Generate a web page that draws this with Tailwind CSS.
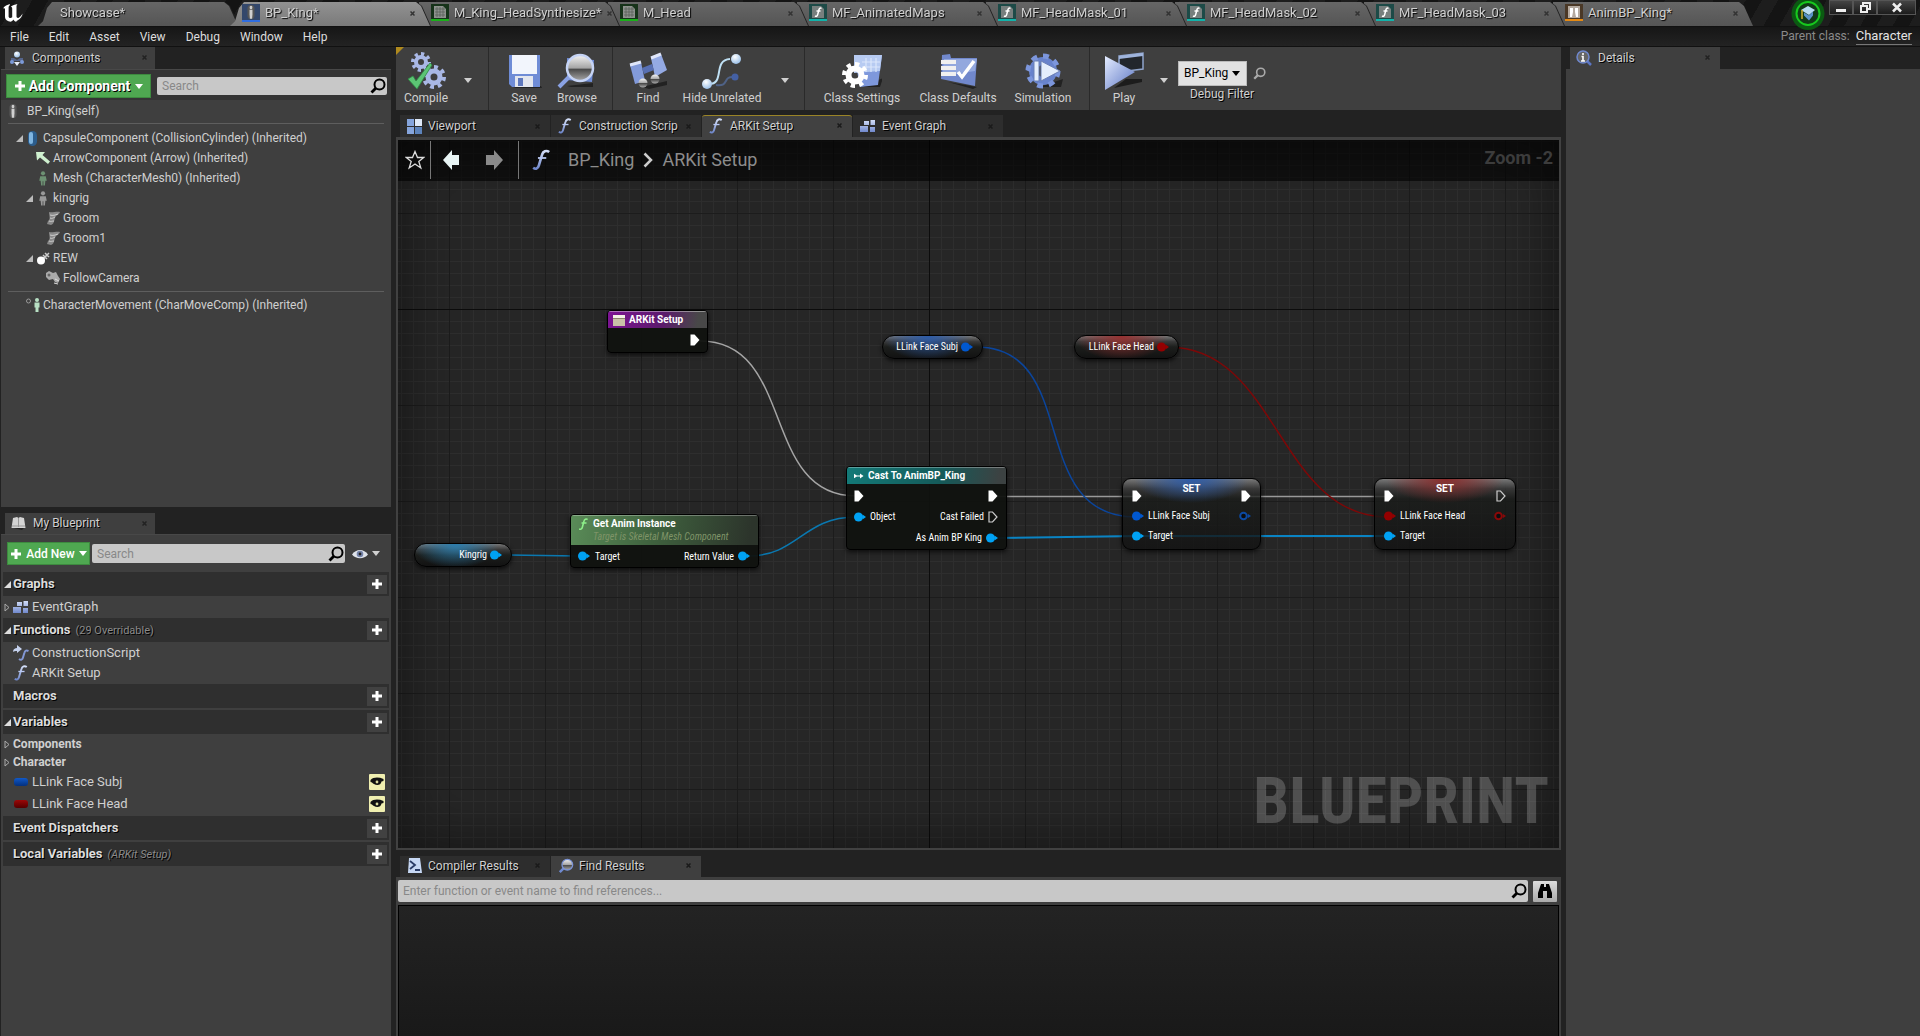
<!DOCTYPE html>
<html lang="en">
<head>
  <meta charset="UTF-8" />
  <meta name="viewport" content="width=device-width, initial-scale=1.0" />
  <title>BP_King - Blueprint Editor</title>
  <script src="https://cdn.jsdelivr.net/npm/@tailwindcss/browser@4"></script>
</head>
<body class="h-screen overflow-hidden bg-[#222] font-[Roboto,'Liberation_Sans',sans-serif] text-[12px] leading-4 text-[#d0d0d0] flex flex-col">

  <!-- shared icons -->
  <svg class="absolute size-0" aria-hidden="true">
    <defs>
      <linearGradient id="steel" x1="0" y1="0" x2="1" y2="1"><stop offset="0" stop-color="#e4ecff" /><stop offset="1" stop-color="#5c76c4" /></linearGradient>
      <linearGradient id="steelDown" x1="0" y1="0" x2="0" y2="1"><stop offset="0" stop-color="#d3def8" /><stop offset="1" stop-color="#7088cc" /></linearGradient>
      <linearGradient id="body" x1="0" y1="0" x2="1" y2="0"><stop offset="0" stop-color="#777" /><stop offset=".5" stop-color="#eee" /><stop offset="1" stop-color="#777" /></linearGradient>
      <linearGradient id="glass" x1="0" y1="0" x2="0" y2="1"><stop offset="0" stop-color="#f4f4f4" /><stop offset=".5" stop-color="#a5a5a5" /><stop offset=".55" stop-color="#4a4a4a" /><stop offset="1" stop-color="#aaa" /></linearGradient>
      <radialGradient id="ball" cx=".4" cy=".3" r=".7"><stop offset="0" stop-color="#fff" /><stop offset="1" stop-color="#9bc0e8" /></radialGradient>
    </defs>
    <symbol id="plus" viewBox="0 0 12 12"><path d="M4.500 1h3v3.500H11v3H7.500V11h-3V7.500H1v-3h3.500z" fill="currentColor" /></symbol>
    <symbol id="caret" viewBox="0 0 8 5"><path d="M0 0h8L4 5z" fill="currentColor" /></symbol>
    <symbol id="open" viewBox="0 0 8 8"><path d="M8 0v8H0z" fill="currentColor" /></symbol>
    <symbol id="closed" viewBox="0 0 6 9"><path d="M1 1v7l4-3.500z" fill="none" stroke="currentColor" /></symbol>
    <symbol id="close" viewBox="0 0 5 5"><path d="M.5.5l4 4m0-4l-4 4" stroke="currentColor" stroke-width="1.500" /></symbol>
    <symbol id="search" viewBox="0 0 16 16"><circle cx="9.500" cy="6.500" r="5" fill="none" stroke="currentColor" stroke-width="2" /><path d="M6 10l-4.500 4.500" stroke="currentColor" stroke-width="2.800" /></symbol>
    <symbol id="func" viewBox="0 0 16 18"><path d="M1 15.500c2 1.500 4 1 4.800-2L8.500 4.500C9.300 1.500 12 .5 14.500 2.300" fill="none" stroke="url(#steelDown)" stroke-width="2.200" /><path d="M5 7.300h7" stroke="#b9c8f2" stroke-width="1.500" /></symbol>
    <symbol id="person" viewBox="0 0 10 16"><circle cx="5" cy="2.500" r="2.200" fill="currentColor" /><path d="M2 5.500h6l1 5H7.500L7 15.500H5.400V11h-.8v4.500H3L2.500 10.500H1z" fill="currentColor" /></symbol>
    <symbol id="figure" viewBox="0 0 10 18"><rect x="1" y="1" width="8" height="16" rx="4" fill="#565656" /><circle cx="5" cy="4" r="2" fill="url(#body)" /><path d="M2.800 6.500h4.400v5l-.8 5H3.600l-.8-5z" fill="url(#body)" /></symbol>
    <symbol id="graph" viewBox="0 0 16 13"><path d="M4 1h5v4H4zM10.500 0H15v5h-4.500zM0 6h8v6H0zM10 7h5v5h-5z" fill="url(#steelDown)" /></symbol>
    <symbol id="groom" viewBox="0 0 16 16"><path d="M4 2c3 1 8-1 11 0-1 3-4 3-5 6s-1 6-4 7l-4-1 1-3c3-2 1-5 1-9z" fill="#8a8a8a" /><path d="M5 5c3 1 5 0 8-1M5 8c2 1 3 0 5-1M4 11c2 1 3 0 5 0" stroke="#ccc" fill="none" /></symbol>
    <symbol id="mat" viewBox="0 0 18 18"><path d="M0 0h18v15H0z" fill="#17331a" /><path d="M3 2h9l3 3v9H3z" fill="#8d918d" /><path d="M4 5h10M4 8h10M4 11h10M6 3v10M9 3v10M12 3v10" stroke="#565b56" stroke-width=".7" /><path d="M0 15h18v2H0z" fill="#1ab01a" /></symbol>
    <symbol id="matfn" viewBox="0 0 18 18"><path d="M0 0h18v15H0z" fill="#1d4a47" /><path d="M3 2h9l3 3v9H3z" fill="#777f7e" /><path d="M6 12c1.500.8 2.300 0 2.700-1.500L10 5.500c.4-1.300 1.300-1.800 2.500-1M7.500 7h4" stroke="#fff" stroke-width="1.500" fill="none" /><path d="M0 15h18v2H0z" fill="#12b3aa" /></symbol>
    <symbol id="exec" viewBox="0 0 10 12"><path d="M.5.5h4L9.500 6l-5 5.500h-4z" fill="#fff" /></symbol>
    <symbol id="execOpen" viewBox="0 0 10 12"><path d="M1 1h3.500L9 6l-4.500 5H1z" fill="none" stroke="#ccc" stroke-width="1.200" /></symbol>
    <symbol id="pin" viewBox="0 0 12 10"><circle cx="4.500" cy="5" r="4.500" fill="currentColor" /><path d="M8.500 2.500l3.500 2.500-3.500 2.500z" fill="currentColor" /></symbol>
    <symbol id="pinOpen" viewBox="0 0 12 10"><circle cx="4.500" cy="5" r="3.300" fill="#0b0d10" stroke="currentColor" stroke-width="2" /><path d="M9 3l3 2-3 2z" fill="currentColor" /></symbol>
    <symbol id="eye" viewBox="0 0 16 10"><path d="M0 5.500C4-.5 12-.5 16 5.500c-4 5-12 5-16 0z" fill="#dfe3ea" /><circle cx="8" cy="5" r="3.300" fill="#7584ab" /><circle cx="8" cy="5" r="1.400" fill="#222" /></symbol>
    <symbol id="eyeOn" viewBox="0 0 16 16"><rect width="16" height="16" rx="1" fill="#f0efb0" /><path d="M1.500 6c3-3 8-3 13-1v2l-2 .5c-.5 4-5 4-7.500 2.500C3.500 9.500 3 8 1.500 8z" fill="#111" /><circle cx="8" cy="8" r="1.400" fill="#d9d89c" /></symbol>
    <symbol id="lens" viewBox="0 0 18 18"><path d="M8 10l-6 6" stroke="#6f8ad0" stroke-width="2.800" /><circle cx="10.500" cy="7.500" r="6" fill="url(#glass)" stroke="#7c94d6" stroke-width="1.500" /></symbol>
  </svg>

  <!-- document tabs -->
  <header class="relative z-20 h-[27px] shrink-0 flex border-b border-[#111] bg-[repeating-linear-gradient(120deg,#141414_0_14px,#1d1d1d_14px_28px)] text-[13px] [text-shadow:1px_1px_1px_#000]">
    <div class="w-[38px] shrink-0 pt-1 pl-[3px]">
      <svg class="w-5 h-[18px]" viewBox="0 0 20 18"><path d="M0 4.500C1.500 2 4.500.8 6.800 0v1.200c-.9.600-1.200 1.300-1.200 2.500v9c.5 1.400 2.200 1.700 3.600.5V4.500c0-1.100-.6-1.600-1.400-1.800C9.400 1.200 12 .5 14.600 0c-.8.800-1.100 1.500-1.100 2.800v9.500c0 1.500 1.200 2 2.200 1.500 1.600-.8 2.800-2.600 3.900-4.200-.4 3-2 5.200-4.400 6.300-1.100.5-1.600 1.100-2 1.900-1.400-.300-2.200-1.100-2.700-2.200-.7 1-1.400 1.700-2.700 2.200C4.500 17.500 2 15.700 2 12.500V5.500c0-1.300-.9-1.500-2-1z" fill="#fff" /></svg>
    </div>
    <nav class="flex min-w-0 pt-[2px] [&_a]:flex [&_a]:h-full [&_a]:items-center [&_a]:gap-[5px] [&_a]:pb-[2px] [&_a]:pr-[15px]">
      <div class="z-10 -mr-2 w-[200px] [filter:drop-shadow(1px_0_0_#222)]"><a href="#" class="pl-[22px] bg-linear-to-b from-[#666] to-[#555] [clip-path:polygon(0_100%,5px_80%,9px_6px,14px_0,calc(100%-14px)_0,calc(100%-9px)_4px,100%_100%)]">Showcase*</a></div>
      <div class="z-20 -mr-[11px] w-[200px] [filter:drop-shadow(1px_0_0_#222)]"><a href="#" class="pl-3 bg-linear-to-b from-[#929292] to-[#7a7a7a] [clip-path:polygon(0_100%,5px_80%,9px_6px,14px_0,calc(100%-14px)_0,calc(100%-9px)_4px,100%_100%)]"><svg class="size-[18px] bg-[#33476b] border-b-2 border-[#2f6de0]"><use href="#figure" /></svg><span class="flex-1">BP_King*</span><svg class="size-[5px] text-[#333]"><use href="#close" /></svg></a></div>
      <div class="z-[9] -mr-[11px] w-[200px] [filter:drop-shadow(1px_0_0_#222)]"><a href="#" class="pl-3 bg-linear-to-b from-[#666] to-[#555] [clip-path:polygon(0_100%,0_0,calc(100%-14px)_0,calc(100%-9px)_4px,100%_100%)]"><svg class="size-[18px] shrink-0"><use href="#mat" /></svg><span class="flex-1 whitespace-nowrap">M_King_HeadSynthesize*</span><svg class="size-[5px] shrink-0 text-[#333]"><use href="#close" /></svg></a></div>
      <div class="z-[8] -mr-[11px] w-[200px] [filter:drop-shadow(1px_0_0_#222)]"><a href="#" class="pl-3 bg-linear-to-b from-[#666] to-[#555] [clip-path:polygon(0_100%,0_0,calc(100%-14px)_0,calc(100%-9px)_4px,100%_100%)]"><svg class="size-[18px]"><use href="#mat" /></svg><span class="flex-1">M_Head</span><svg class="size-[5px] text-[#333]"><use href="#close" /></svg></a></div>
      <div class="z-[7] -mr-[11px] w-[200px] [filter:drop-shadow(1px_0_0_#222)]"><a href="#" class="pl-3 bg-linear-to-b from-[#666] to-[#555] [clip-path:polygon(0_100%,0_0,calc(100%-14px)_0,calc(100%-9px)_4px,100%_100%)]"><svg class="size-[18px]"><use href="#matfn" /></svg><span class="flex-1">MF_AnimatedMaps</span><svg class="size-[5px] text-[#333]"><use href="#close" /></svg></a></div>
      <div class="z-[6] -mr-[11px] w-[200px] [filter:drop-shadow(1px_0_0_#222)]"><a href="#" class="pl-3 bg-linear-to-b from-[#666] to-[#555] [clip-path:polygon(0_100%,0_0,calc(100%-14px)_0,calc(100%-9px)_4px,100%_100%)]"><svg class="size-[18px]"><use href="#matfn" /></svg><span class="flex-1">MF_HeadMask_01</span><svg class="size-[5px] text-[#333]"><use href="#close" /></svg></a></div>
      <div class="z-[5] -mr-[11px] w-[200px] [filter:drop-shadow(1px_0_0_#222)]"><a href="#" class="pl-3 bg-linear-to-b from-[#666] to-[#555] [clip-path:polygon(0_100%,0_0,calc(100%-14px)_0,calc(100%-9px)_4px,100%_100%)]"><svg class="size-[18px]"><use href="#matfn" /></svg><span class="flex-1">MF_HeadMask_02</span><svg class="size-[5px] text-[#333]"><use href="#close" /></svg></a></div>
      <div class="z-[4] -mr-[11px] w-[200px] [filter:drop-shadow(1px_0_0_#222)]"><a href="#" class="pl-3 bg-linear-to-b from-[#666] to-[#555] [clip-path:polygon(0_100%,0_0,calc(100%-14px)_0,calc(100%-9px)_4px,100%_100%)]"><svg class="size-[18px]"><use href="#matfn" /></svg><span class="flex-1">MF_HeadMask_03</span><svg class="size-[5px] text-[#333]"><use href="#close" /></svg></a></div>
      <div class="z-[3] w-[200px]"><a href="#" class="pl-3 bg-linear-to-b from-[#666] to-[#555] [clip-path:polygon(0_100%,0_0,calc(100%-14px)_0,calc(100%-9px)_4px,100%_100%)]"><svg class="size-[18px]" viewBox="0 0 18 18"><path d="M0 0h18v15H0z" fill="#4a3826" /><path d="M3 2h12v12H3z" fill="#b5aaa0" /><path d="M5 4h3v4l-1 5H5zM10 4h3v9h-2l-1-5z" fill="#fff" /><path d="M0 15h18v2H0z" fill="#e58a13" /></svg><span class="flex-1">AnimBP_King*</span><svg class="size-[5px] text-[#333]"><use href="#close" /></svg></a></div>
    </nav>
    <div class="ml-auto flex items-start">
      <svg class="-mb-2 mr-1 size-[34px] -mt-[3px]" viewBox="0 0 34 34"><circle cx="17" cy="16.500" r="16.500" fill="#0b5a12" /><circle cx="17" cy="16.500" r="11.500" fill="#123a17" stroke="#17c81e" stroke-width="2" /><path d="M10 13l7-4 7 4-6 5z" fill="#b9dcf2" /><path d="M13 15.500l5 3 4-4v4l-4 5-5-5z" fill="#5b93c8" /><path d="M11 13v9" stroke="#d0b030" stroke-width="1.500" /></svg>
      <div class="flex mr-1">
        <button aria-label="Minimize" class="grid h-[15px] w-6 place-items-center border border-[#555] bg-linear-to-b from-[#444] to-[#1c1c1c]"><svg class="h-[11px] w-3" viewBox="0 0 12 11"><path d="M1 7h10v3H1z" fill="#eee" /></svg></button>
        <button aria-label="Restore" class="grid h-[15px] w-6 place-items-center border border-[#555] bg-linear-to-b from-[#444] to-[#1c1c1c]"><svg class="h-[11px] w-3" viewBox="0 0 12 11"><path d="M4 3V1h7v6H9M2 4h6v6H2z" fill="none" stroke="#eee" stroke-width="2" /></svg></button>
        <button aria-label="Close" class="grid h-[15px] w-[39px] place-items-center border border-[#555] bg-linear-to-b from-[#444] to-[#1c1c1c]"><svg class="h-[11px] w-3" viewBox="0 0 12 11"><path d="M2 1.500l8 8m0-8l-8 8" stroke="#eee" stroke-width="2.500" /></svg></button>
      </div>
    </div>
  </header>

  <!-- menu -->
  <div class="flex h-5 shrink-0 items-center justify-between border-b border-[#111] bg-linear-to-b from-[#161616] to-[#232323] pl-[10px] pr-2">
    <nav class="flex gap-5 text-[#ddd]">
      <button>File</button><button>Edit</button><button>Asset</button><button>View</button><button>Debug</button><button>Window</button><button>Help</button>
    </nav>
    <p class="flex gap-[6px] text-[#8a8a8a]">Parent class: <a href="#" class="border-b border-[#777] text-[13px] text-[#e4e4e4]">Character</a></p>
  </div>

  <main class="grid min-h-0 flex-1 grid-cols-[391px_minmax(0,1fr)_354px] gap-x-[5px] leading-4">

    <!-- left column -->
    <div class="flex min-h-0 flex-col gap-[6px] pl-px">
      <section class="flex h-[460px] flex-col">
        <h2 class="ml-1 flex h-[22px] w-[150px] shrink-0 items-center gap-[7px] bg-[#3f3f3f] pl-1 pr-2 pb-px [text-shadow:1px_1px_0_#000]">
          <svg class="size-4" viewBox="0 0 16 16"><circle cx="8" cy="4.500" r="3" fill="url(#ball)" /><path d="M2 8h3l3 2 3-2h3v3H2z" fill="#55658c" /><circle cx="3" cy="12" r="2" fill="#7c9ad8" /><circle cx="13" cy="12" r="2" fill="#7c9ad8" /><path d="M5 12h6l-3 4z" fill="#e6ecf8" /></svg>
          <span class="flex-1">Components</span><svg class="size-[5px] text-[#222]"><use href="#close" /></svg>
        </h2>
        <div class="flex-1 bg-[#3f3f3f] border-t border-[#484848]">
          <div class="flex items-center gap-[6px] bg-[#353535] pt-1 pb-[2px] pl-[5px] pr-1">
            <button class="flex h-6 w-[145px] items-center justify-center gap-[3px] border border-[#3d8a3f] bg-[#4fa851] text-[14px] font-bold text-white [text-shadow:1px_1px_0_#000]"><svg class="size-3"><use href="#plus" /></svg>Add Component<svg class="ml-[2px] h-[5px] w-2"><use href="#caret" /></svg></button>
            <div class="flex h-[18px] flex-1 items-center rounded-[2px] bg-[#c8c8c8] pl-[5px] pr-[1px] text-black"><input type="text" aria-label="Search components" placeholder="Search" class="w-full min-w-0 bg-transparent placeholder:text-[#888] outline-none" /><svg class="size-4 shrink-0"><use href="#search" /></svg></div>
          </div>
          <div class="px-[7px]">
            <div class="flex h-[22px] items-center gap-[9px]"><svg class="h-4 w-[10px]"><use href="#figure" /></svg>BP_King(self)</div>
            <hr class="mb-1 mt-px border-[#5e5e5e]" />
            <ul class="[&>li]:flex [&>li]:h-5 [&>li]:items-center">
              <li class="pl-2"><svg class="mr-1 size-[7px] text-[#bbb]"><use href="#open" /></svg><svg class="mr-[5px] h-[15px] w-[11px]" viewBox="0 0 11 15"><rect x="1" width="9" height="15" rx="4.500" fill="#2c5d8c" /><rect x="2" y="1" width="4" height="12" rx="2" fill="#7fb5e0" /></svg>CapsuleComponent (CollisionCylinder) (Inherited)</li>
              <li class="pl-[27px]"><svg class="mr-[2px] h-[14px] w-4" viewBox="0 0 16 14"><path d="M1 1h9L7.500 4 15 10.500 13 13 5 6.500 2 9.500z" fill="#cff0cf" /></svg>ArrowComponent (Arrow) (Inherited)</li>
              <li class="pl-[30px]"><svg class="mr-[5px] h-[15px] w-[10px] text-[#6d9173]"><use href="#person" /></svg>Mesh (CharacterMesh0) (Inherited)</li>
              <li class="pl-[18px]"><svg class="mr-[5px] size-[7px] text-[#bbb]"><use href="#open" /></svg><svg class="mr-[5px] h-[15px] w-[10px] text-[#999]"><use href="#person" /></svg>kingrig</li>
              <li class="pl-[37px]"><svg class="mr-[2px] size-4"><use href="#groom" /></svg>Groom</li>
              <li class="pl-[37px]"><svg class="mr-[2px] size-4"><use href="#groom" /></svg>Groom1</li>
              <li class="pl-[18px]"><svg class="mr-1 size-[7px] text-[#bbb]"><use href="#open" /></svg><svg class="mr-[3px] h-[14px] w-[13px]" viewBox="0 0 13 14"><path d="M6 8l6-6M6 4l4 4M8 2l4 4" stroke="#ccc" stroke-width="1.500" /><circle cx="4" cy="9.500" r="4" fill="#fff" /></svg>REW</li>
              <li class="pl-[37px]"><svg class="mr-[2px] size-4" viewBox="0 0 16 16"><path d="M1 3l3-2 4 2 3-1 2 4 2 3-2 4-3-1-2-3-4 1-3-3z" fill="#aaa" /><circle cx="4" cy="5" r="1.500" fill="#666" /><path d="M10 9l4 2M9 13l4 1" stroke="#ddd" /></svg>FollowCamera</li>
            </ul>
            <hr class="mb-[3px] mt-[3px] border-[#5e5e5e]" />
            <div class="flex h-5 items-center pl-[17px]"><svg class="mr-[2px] h-4" width="16" viewBox="0 0 16 16"><circle cx="3.500" cy="4" r="2" fill="none" stroke="#999" /><circle cx="12" cy="3" r="2" fill="#b8e0c4" /><path d="M9.500 5.500h5v5h-1V15h-3v-4.500h-1z" fill="#b8e0c4" /></svg>CharacterMovement (CharMoveComp) (Inherited)</div>
          </div>
        </div>
      </section>

      <section class="flex min-h-0 flex-1 flex-col">
        <h2 class="ml-1 flex h-[21px] w-[150px] shrink-0 items-center gap-[7px] bg-[#3f3f3f] pl-[6px] pr-2 pb-px [text-shadow:1px_1px_0_#000]">
          <svg class="size-[15px]" viewBox="0 0 15 15"><path d="M2 2l4-1 1.500 1L9 1l4 1 1.500 10H.5z" fill="#d4d4d4" /><path d="M7.500 2v9M1 10h13" stroke="#999" /><path d="M3 12h10l-2 2z" fill="#222" /></svg>
          <span class="flex-1">My Blueprint</span><svg class="size-[5px] text-[#222]"><use href="#close" /></svg>
        </h2>
        <div class="flex-1 bg-[#3f3f3f] border-t border-[#484848] px-[2px]">
          <div class="flex h-[37px] items-center pl-1 pr-[9px]">
            <button class="mr-[2px] flex h-[23px] w-[83px] items-center justify-center gap-1 whitespace-nowrap border border-[#3d8a3f] bg-[#4fa851] font-medium text-white"><svg class="size-3"><use href="#plus" /></svg>Add New<svg class="h-[5px] w-2"><use href="#caret" /></svg></button>
            <div class="flex h-[19px] flex-1 items-center rounded-[2px] bg-[#c8c8c8] pl-[5px] pr-[1px] text-black"><input type="text" aria-label="Search blueprint" placeholder="Search" class="w-full min-w-0 bg-transparent placeholder:text-[#888] outline-none" /><svg class="size-4 shrink-0"><use href="#search" /></svg></div>
            <button aria-label="View options" class="ml-[7px] flex items-center gap-1"><svg class="h-[10px] w-4"><use href="#eye" /></svg><svg class="h-[5px] w-2"><use href="#caret" /></svg></button>
          </div>

          <div class="text-[13px] [&_h3]:flex [&_h3]:h-6 [&_h3]:items-center [&_h3]:bg-[#2f2f2f] [&_h3]:font-bold [&_h3]:text-[#ddd] [&_h3]:[text-shadow:1px_1px_0_#000] [&_h3>button]:ml-auto [&_h3>button]:mr-[2px] [&_h3>button]:grid [&_h3>button]:h-[19px] [&_h3>button]:w-5 [&_h3>button]:place-items-center [&_h3>button]:bg-[#414141] [&_h3>button]:text-white">
            <h3><svg class="ml-px mr-[2px] size-[7px]"><use href="#open" /></svg>Graphs<button aria-label="Add graph"><svg class="size-3"><use href="#plus" /></svg></button></h3>
            <div class="flex h-[22px] items-center"><svg class="ml-[1px] mr-[3px] h-[9px] w-[6px] text-[#aaa]"><use href="#closed" /></svg><svg class="mr-[3px] h-[13px] w-4"><use href="#graph" /></svg>EventGraph</div>
            <h3><svg class="ml-px mr-[2px] size-[7px]"><use href="#open" /></svg>Functions<span class="ml-[5px] pt-[2px] text-[11px] font-normal text-[#8a8a8a]">(29 Overridable)</span><button aria-label="Add function"><svg class="size-3"><use href="#plus" /></svg></button></h3>
            <div class="py-px">
              <div class="flex h-5 items-center pl-[10px]"><svg class="mr-[3px] size-4" viewBox="0 0 16 16"><path d="M0 7c0-3 2-4 4-4V0l5 4-5 4V6C2 6 1 6 0 7z" fill="#c5d2ee" /><path d="M6 14c2 1.500 3.500.5 4-1.500l1.500-5c.5-2 2-2.500 4-1.500" fill="none" stroke="#8297d4" stroke-width="2" /></svg>ConstructionScript</div>
              <div class="flex h-5 items-center pl-[10px]"><svg class="mr-[3px] size-4"><use href="#func" /></svg>ARKit Setup</div>
            </div>
            <h3 class="pl-[10px]">Macros<button aria-label="Add macro"><svg class="size-3"><use href="#plus" /></svg></button></h3>
            <h3 class="mt-[2px] mb-px"><svg class="ml-px mr-[2px] size-[7px]"><use href="#open" /></svg>Variables<button aria-label="Add variable"><svg class="size-3"><use href="#plus" /></svg></button></h3>
            <div class="flex h-[18px] items-center text-[12px] font-bold"><svg class="ml-px mr-[3px] h-[9px] w-[6px] text-[#aaa]"><use href="#closed" /></svg>Components</div>
            <div class="flex h-[18px] items-center text-[12px] font-bold"><svg class="ml-px mr-[3px] h-[9px] w-[6px] text-[#aaa]"><use href="#closed" /></svg>Character</div>
            <div class="flex h-[22px] items-center pl-[11px] pr-1"><span class="mr-[4px] h-2 w-[14px] rounded-[3px] bg-linear-to-b from-[#1159c8] to-[#04307e]"></span>LLink Face Subj<svg class="ml-auto size-4"><use href="#eyeOn" /></svg></div>
            <div class="flex h-[22px] items-center pl-[11px] pr-1"><span class="mr-[4px] h-2 w-[14px] rounded-[3px] bg-linear-to-b from-[#9c0808] to-[#560000]"></span>LLink Face Head<svg class="ml-auto size-4"><use href="#eyeOn" /></svg></div>
            <h3 class="mt-px pl-[10px]">Event Dispatchers<button aria-label="Add event dispatcher"><svg class="size-3"><use href="#plus" /></svg></button></h3>
            <h3 class="mt-[2px] pl-[10px]">Local Variables<span class="ml-[5px] pt-[2px] text-[11px] font-normal italic text-[#8a8a8a]">(ARKit Setup)</span><button aria-label="Add local variable"><svg class="size-3"><use href="#plus" /></svg></button></h3>
          </div>
        </div>
      </section>
    </div>

    <!-- centre column -->
    <div class="flex min-h-0 min-w-0 flex-col">
      <div class="relative flex h-[63px] shrink-0 items-stretch bg-[#3f3f3f] [text-shadow:1px_1px_0_#000]">
        <svg class="absolute left-0 top-0 size-2" viewBox="0 0 8 8"><path d="M0 0h8L0 8z" fill="#b08a1e" /></svg>
        <div class="flex w-[93px] items-center border-r border-[#2a2a2a] pl-[6px]">
          <button class="flex w-12 flex-col items-center"><svg class="h-[38px] w-10" viewBox="0 0 40 38"><g fill="none" stroke="#a9b8e6"><circle cx="15" cy="10" r="5" stroke-width="4" /><circle cx="15" cy="10" r="8" stroke-width="4" pathLength="16" stroke-dasharray="1 1" /><circle cx="28" cy="25" r="6" stroke-width="5" /><circle cx="28" cy="25" r="10" stroke-width="4" pathLength="16" stroke-dasharray="1 1" /></g><path d="M2 27l5-3 3 5L24 11l2 2-15 24z" fill="#5cc474" stroke="#2f8a45" stroke-width=".8" /></svg>Compile</button>
          <button aria-label="Compile options" class="ml-[14px]"><svg class="mt-1 h-[5px] w-2"><use href="#caret" /></svg></button>
        </div>
        <div class="flex w-[124px] items-center border-r border-[#2a2a2a] pl-2">
          <button class="flex w-[54px] flex-col items-center"><svg class="h-[38px] w-10" viewBox="0 0 40 38"><path d="M7 34h30l1 2H12z" fill="#222" /><path d="M5 3h31v32H8l-3-3z" fill="#6f8cd6" /><path d="M8 3h25v19H8z" fill="#f2f5fc" /><path d="M11 24h18v11H11z" fill="#e3e6ee" /><path d="M14 26h5v8h-5z" fill="#5f78bd" /></svg>Save</button>
          <button class="flex w-[52px] flex-col items-center"><svg class="h-[38px] w-10" viewBox="0 0 40 38"><path d="M10 34l26-3v4H14z" fill="#222" /><path d="M10 6l27 2-2 22-25-2z" fill="#6f8cd6" /><path d="M13 24L2 35" stroke="#8aa2e4" stroke-width="4" /><circle cx="23" cy="16" r="13" fill="url(#glass)" stroke="#c6d4f5" stroke-width="2.500" /></svg>Browse</button>
        </div>
        <div class="flex w-[192px] items-center border-r border-[#2a2a2a] pl-2">
          <button class="flex w-[54px] flex-col items-center"><svg class="h-[38px] w-10" viewBox="0 0 40 38"><path d="M14 35l25-6v4l-18 4z" fill="#222" /><path d="M2 13l11-3 4 19-10 3z" fill="#829ada" /><path d="M23 6l10-4 6 16-12 7z" fill="#94aae4" /><path d="M14 16l10-4 2 6-10 4z" fill="#5870b4" /><path d="M2 13l11-3M23 6l10-4" stroke="#dfe6fa" stroke-width="3" /><circle cx="15" cy="31" r="4.500" fill="url(#glass)" /><circle cx="27" cy="27" r="4.500" fill="url(#glass)" /></svg>Find</button>
          <button class="ml-[4px] flex w-[86px] flex-col items-center whitespace-nowrap"><svg class="h-[38px] w-10" viewBox="0 0 40 38"><path d="M14 33c14 2 6-9 18-8" fill="none" stroke="#4f6286" stroke-width="2" /><circle cx="33" cy="25" r="3.500" fill="#4460a4" /><path d="M6 32c18 1 4-24 22-25" fill="none" stroke="#bfe0f4" stroke-width="2" /><circle cx="5" cy="32" r="5" fill="url(#ball)" /><circle cx="34" cy="7" r="5" fill="url(#ball)" /></svg>Hide Unrelated</button>
          <button aria-label="Hide unrelated options" class="ml-4"><svg class="mt-1 h-[5px] w-2"><use href="#caret" /></svg></button>
        </div>
        <div class="flex w-[285px] items-center gap-[10px] border-r border-[#2a2a2a] pl-[14px]">
          <button class="flex w-[86px] flex-col items-center whitespace-nowrap"><svg class="h-[38px] w-10" viewBox="0 0 40 38"><path d="M20 35h18l3-9z" fill="#222" /><path d="M12 3h28l-4 30-18 2z" fill="#7e98dc" /><path d="M12 3h28l-2 16-26 2z" fill="#b7cbf2" /><path d="M24 6v14M29 6v14M34 6v14M20 10h18M20 15h18" stroke="#dbe6fb" stroke-width="1.200" /><circle cx="13" cy="23" r="6.500" fill="none" stroke="#fff" stroke-width="6" /><circle cx="13" cy="23" r="11" fill="none" stroke="#fff" stroke-width="4" pathLength="16" stroke-dasharray="1 1" /></svg>Class Settings</button>
          <button class="flex w-[86px] flex-col items-center whitespace-nowrap"><svg class="h-[38px] w-10" viewBox="0 0 40 38"><path d="M10 30l29 5-4 2z" fill="#222" /><path d="M4 3l8-1 1 4h26l-2 28-34-7z" fill="#7188cc" /><path d="M6 7h33l-2 12L4 24z" fill="#93a8de" /><path d="M3 8h15v4H3zM3 14h15v4H3zM3 20h15v4H3z" fill="#f0f0f0" /><path d="M20 20l4 5L36 9" fill="none" stroke="#fff" stroke-width="3.500" /></svg>Class Defaults</button>
          <button class="flex w-[64px] flex-col items-center"><svg class="h-[38px] w-10" viewBox="0 0 40 38"><path d="M16 35h22l2-8z" fill="#222" /><circle cx="20" cy="19" r="10" fill="none" stroke="#6883cc" stroke-width="8" /><circle cx="20" cy="19" r="15" fill="none" stroke="#7c96dc" stroke-width="5" pathLength="16" stroke-dasharray="1 1" /><path d="M11 9h5v20h-5zM18 9l19 10-19 10z" fill="#e4eefc" stroke="#6b80b5" /></svg>Simulation</button>
        </div>
        <div class="flex items-center pl-[14px]">
          <button class="flex w-10 flex-col items-center"><svg class="h-[38px] w-10" viewBox="0 0 40 38"><path d="M10 36l28-6v-3H22z" fill="#1c1c1c" /><path d="M15 4l24-3v16l-24 3z" fill="#22262c" stroke="#8fa4cc" stroke-width="1.500" /><path d="M15 4l24-3v3L15 7z" fill="#9fb4dc" /><path d="M1 4l30 16L1 38z" fill="url(#steel)" /></svg>Play</button>
          <button aria-label="Play options" class="ml-4"><svg class="mt-1 h-[5px] w-2"><use href="#caret" /></svg></button>
          <div class="ml-[10px] flex flex-col items-center pt-[5px]">
            <div class="flex items-center gap-[6px]">
              <div class="relative">
                <select id="debugFilter" class="h-[25px] w-[69px] appearance-none border border-[#bbb] bg-[#e2e2e2] pl-[5px] text-black [text-shadow:none]"><option>BP_King</option></select>
                <svg class="pointer-events-none absolute right-[7px] top-[10px] h-[5px] w-2 text-black"><use href="#caret" /></svg>
              </div>
              <svg class="size-[13px] text-[#aaa]"><use href="#search" /></svg>
            </div>
            <label for="debugFilter">Debug Filter</label>
          </div>
        </div>
      </div>

      <!-- graph tabs -->
      <nav class="mt-[5px] flex h-[22px] shrink-0 gap-px pl-1 [text-shadow:1px_1px_0_#000] [&>a]:flex [&>a]:w-[150px] [&>a]:items-center [&>a]:pl-[7px] [&>a]:pr-[10px] [&>a]:bg-[#2d2d2d]">
        <a href="#"><svg class="mr-[6px] size-[15px]" viewBox="0 0 15 15"><path d="M0 0h7v7H0zM0 8h7v7H0z" fill="#86a5dc" /><path d="M8 0h7v7H8z" fill="#dfe9f8" /><path d="M8 8h7v7H8z" fill="#5d83bb" /></svg><span class="flex-1">Viewport</span><svg class="size-[5px] text-[#1a1a1a]"><use href="#close" /></svg></a>
        <a href="#"><svg class="mr-[7px] h-4 w-[14px] shrink-0"><use href="#func" /></svg><span class="w-[101px] overflow-hidden whitespace-nowrap">Construction Scrip</span><svg class="ml-auto size-[5px] shrink-0 text-[#1a1a1a]"><use href="#close" /></svg></a>
        <a href="#" class="rounded-t-[3px] border-t border-[#9a8427] bg-[#414141]! pb-[2px]"><svg class="mr-[7px] h-4 w-[14px]"><use href="#func" /></svg><span class="flex-1">ARKit Setup</span><svg class="size-[5px] text-[#1a1a1a]"><use href="#close" /></svg></a>
        <a href="#"><svg class="mr-[6px] h-[13px] w-4"><use href="#graph" /></svg><span class="flex-1">Event Graph</span><svg class="size-[5px] text-[#1a1a1a]"><use href="#close" /></svg></a>
      </nav>

      <!-- graph canvas -->
      <section class="relative min-h-0 flex-1 overflow-hidden border-2 border-t-3 border-[#414141] bg-[#262626]">
        <svg class="absolute inset-0 size-full">
          <defs>
            <pattern id="minor" x="3" y="1" width="12" height="12" patternUnits="userSpaceOnUse"><path d="M.5 0v12M0 .5h12" stroke="#2e2e2e" /></pattern>
            <pattern id="major" x="51" y="73" width="96" height="96" patternUnits="userSpaceOnUse"><path d="M.5 0v96M0 .5h96" stroke="#1c1c1c" /></pattern>
          </defs>
          <rect width="100%" height="100%" fill="url(#minor)" />
          <rect width="100%" height="100%" fill="url(#major)" />
          <path d="M531.500 0v2000M0 169.500h3000" stroke="#0c0c0c" />
        </svg>
        <div class="absolute inset-0 shadow-[inset_0_0_60px_#0008]"></div>
        <p class="absolute bottom-[11px] right-[10px] font-['Roboto_Condensed',Roboto,sans-serif] text-[64px] leading-[70px] font-bold text-white/20">BLUEPRINT</p>

        <!-- wires -->
        <svg class="absolute inset-0 size-full" fill="none" stroke-width="1.500">
          <path d="M302 201C398 201 362 356 458 356" stroke="#a5a5a5" />
          <path d="M595 356.500H738M847 356.500H990" stroke="#999" />
          <path d="M578 207C684 207 627 377 738 377" stroke="#0b459c" />
          <path d="M770 207C880 207 880 377 990 377" stroke="#7c0808" />
          <path d="M103 415L180 416M350 416C400 416 405 377 458 377" stroke="#0a78b0" />
          <path d="M595 398L738 396L990 396" stroke="#0a84c4" stroke-width="2" />
        </svg>

        <!-- nodes -->
        <div class="absolute left-[209px] top-[170px] h-[43px] w-[101px] overflow-hidden rounded-[4px] border border-black bg-[#10120f]/95 shadow-[0_2px_5px_#000a] text-[10px] leading-3 text-white">
          <div class="flex h-[17px] items-center gap-1 border-t border-white/40 bg-[linear-gradient(100deg,#7d1493,#5c1a6c_55%,#484848_90%)] pl-[5px] font-bold"><svg class="h-[11px] w-3" viewBox="0 0 12 11"><path d="M0 0h12v11H0z" fill="#c9c2a8" /><path d="M0 0h12v3H0z" fill="#f4f1e6" /><path d="M0 3.500h12" stroke="#8b846c" /></svg>ARKit Setup</div>
          <div class="flex h-6 items-center justify-end pr-[7px]"><svg class="h-3 w-[10px]"><use href="#exec" /></svg></div>
        </div>

        <div class="absolute left-[16px] top-[403px] flex h-6 w-[98px] items-center justify-end gap-[3px] rounded-full border border-black bg-[radial-gradient(ellipse_45%_110%_at_42%_0,#2b7cab_0,transparent_100%),linear-gradient(#777_0,#3a3a3a_25%,#1c1e1c_50%,#121212)] pr-[9px] font-['Roboto_Condensed',Roboto,sans-serif] text-[10px] leading-3 text-white shadow-[0_2px_4px_#000a]">Kingrig<svg class="h-[10px] w-3 text-[#00a2f4]"><use href="#pin" /></svg></div>
        <div class="absolute left-[484px] top-[195px] flex h-6 w-[101px] items-center justify-end gap-[3px] rounded-full border border-black bg-[radial-gradient(ellipse_45%_110%_at_45%_0,#2c5ba8_0,transparent_100%),linear-gradient(#777_0,#3a3a3a_25%,#1c1e1c_50%,#121212)] pr-[9px] font-['Roboto_Condensed',Roboto,sans-serif] text-[10px] leading-3 text-white shadow-[0_2px_4px_#000a]">LLink Face Subj<svg class="h-[10px] w-3 text-[#0058cf]"><use href="#pin" /></svg></div>
        <div class="absolute left-[676px] top-[195px] flex h-6 w-[105px] items-center justify-end gap-[3px] rounded-full border border-black bg-[radial-gradient(ellipse_45%_110%_at_45%_0,#963030_0,transparent_100%),linear-gradient(#777_0,#3a3a3a_25%,#1c1e1c_50%,#121212)] pr-[9px] font-['Roboto_Condensed',Roboto,sans-serif] text-[10px] leading-3 text-white shadow-[0_2px_4px_#000a]">LLink Face Head<svg class="h-[10px] w-3 text-[#940000]"><use href="#pin" /></svg></div>

        <div class="absolute left-[172px] top-[374px] h-[54px] w-[189px] overflow-hidden rounded-[4px] border border-black bg-[#10120f]/95 shadow-[0_2px_5px_#000a] text-[10px] leading-[13px] text-white">
          <div class="flex h-[30px] gap-[5px] border-t border-white/30 bg-[linear-gradient(100deg,#5a8c58,#3f613e_45%,#2c342b_95%)] pl-2 pt-px"><svg class="mt-px h-3 w-[9px]" viewBox="0 0 9 12"><path d="M0 11c2 .8 3-.3 3.400-2L5 3c.4-1.800 2-2.500 3.600-1.500M2.500 5h5" fill="none" stroke="#8ef08a" stroke-width="1.600" /></svg><div><p class="font-bold">Get Anim Instance</p><p class="font-['Roboto_Condensed',Roboto,sans-serif] italic text-[#7f9468]">Target is Skeletal Mesh Component</p></div></div>
          <div class="flex h-[22px] items-center gap-[5px] pl-[7px] pr-2 font-['Roboto_Condensed',Roboto,sans-serif]"><svg class="h-[10px] w-3 text-[#00a2f4]"><use href="#pin" /></svg>Target<span class="ml-auto">Return Value</span><svg class="-ml-px h-[10px] w-3 text-[#00a2f4]"><use href="#pin" /></svg></div>
        </div>

        <div class="absolute left-[448px] top-[326px] h-[84px] w-[161px] overflow-hidden rounded-[4px] border border-black bg-[#10120f]/95 shadow-[0_2px_5px_#000a] text-[10px] leading-3 text-white">
          <div class="flex h-[17px] items-center gap-1 border-t border-white/30 bg-[linear-gradient(100deg,#137a78,#155a59_60%,#3c4242_95%)] pl-[7px] font-bold"><svg class="h-2 w-[10px]" viewBox="0 0 10 8"><path d="M0 2.500l2.500 1.500L0 5.500zM2 4h4" stroke="#fff" stroke-width="1.200" fill="#fff" /><path d="M6 1.500L9.500 4 6 6.500z" fill="#fff" /></svg>Cast To AnimBP_King</div>
          <div class="px-[7px] pt-px font-['Roboto_Condensed',Roboto,sans-serif] [&>div]:flex [&>div]:h-[21px] [&>div]:items-center [&>div]:justify-between">
            <div><svg class="h-3 w-[10px]"><use href="#exec" /></svg><svg class="mr-px h-3 w-[10px]"><use href="#exec" /></svg></div>
            <div><span class="flex items-center gap-1"><svg class="h-[10px] w-3 text-[#00a2f4]"><use href="#pin" /></svg>Object</span><span class="mr-px flex items-center gap-1">Cast Failed<svg class="h-3 w-[10px]"><use href="#execOpen" /></svg></span></div>
            <div class="justify-end!"><span class="mr-px flex items-center gap-1">As Anim BP King<svg class="h-[10px] w-3 text-[#00a2f4]"><use href="#pin" /></svg></span></div>
          </div>
        </div>

        <div class="absolute left-[724px] top-[338px] h-[72px] w-[139px] rounded-[9px] border border-black bg-[radial-gradient(ellipse_42%_24px_at_50%_0,#2c5ba8_0,transparent_100%),linear-gradient(#777_0,#3a3a3acc_10px,#1a1c1acc_20px,#121212cc)] pt-[7px] shadow-[0_2px_5px_#000a] text-[10px] leading-3 text-white">
          <p class="absolute inset-x-0 top-1 text-center font-bold">SET</p>
          <div class="px-[9px] font-['Roboto_Condensed',Roboto,sans-serif] [&>div]:flex [&>div]:h-5 [&>div]:items-center [&>div]:justify-between">
            <div><svg class="h-3 w-[10px]"><use href="#exec" /></svg><svg class="h-3 w-[10px]"><use href="#exec" /></svg></div>
            <div><span class="flex items-center gap-1"><svg class="h-[10px] w-3 text-[#0058cf]"><use href="#pin" /></svg>LLink Face Subj</span><svg class="h-[10px] w-3 text-[#0c4aa4]"><use href="#pinOpen" /></svg></div>
            <div><span class="flex items-center gap-1"><svg class="h-[10px] w-3 text-[#00a2f4]"><use href="#pin" /></svg>Target</span></div>
          </div>
        </div>

        <div class="absolute left-[976px] top-[338px] h-[72px] w-[142px] rounded-[9px] border border-black bg-[radial-gradient(ellipse_42%_24px_at_50%_0,#8a2b2b_0,transparent_100%),linear-gradient(#777_0,#3a3a3acc_10px,#1a1c1acc_20px,#121212cc)] pt-[7px] shadow-[0_2px_5px_#000a] text-[10px] leading-3 text-white">
          <p class="absolute inset-x-0 top-1 text-center font-bold">SET</p>
          <div class="px-[9px] font-['Roboto_Condensed',Roboto,sans-serif] [&>div]:flex [&>div]:h-5 [&>div]:items-center [&>div]:justify-between">
            <div><svg class="h-3 w-[10px]"><use href="#exec" /></svg><svg class="h-3 w-[10px]"><use href="#execOpen" /></svg></div>
            <div><span class="flex items-center gap-1"><svg class="h-[10px] w-3 text-[#940000]"><use href="#pin" /></svg>LLink Face Head</span><svg class="h-[10px] w-3 text-[#8a0808]"><use href="#pinOpen" /></svg></div>
            <div><span class="flex items-center gap-1"><svg class="h-[10px] w-3 text-[#00a2f4]"><use href="#pin" /></svg>Target</span></div>
          </div>
        </div>

        <!-- breadcrumb -->
        <div class="absolute inset-x-0 top-0 flex h-[41px] items-center bg-black/60 pb-[2px] pl-[7px] text-[18px] text-[#8c8c8c]">
          <button aria-label="Bookmark"><svg class="size-5" viewBox="0 0 20 20"><path d="M10 1.500l2.500 6h6.300l-5 4 2 6.500L10 14l-5.800 4 2-6.500-5-4h6.300z" fill="none" stroke="#ddd" stroke-width="1.300" /></svg></button>
          <span class="ml-[5px] h-[38px] w-px bg-[#777]"></span>
          <button aria-label="Back" class="ml-3"><svg class="h-[22px] w-[17px]" viewBox="0 0 17 22"><path d="M0 11l9-10v5h7v10H9v5z" fill="#e8f4f4" /></svg></button>
          <button aria-label="Forward" class="ml-[25px]"><svg class="h-[22px] w-[18px]" viewBox="0 0 18 22"><path d="M18 11L9 1v5H1v10h8v5z" fill="#8a8a8a" /></svg></button>
          <span class="ml-[15px] h-[38px] w-px bg-[#777]"></span>
          <svg class="ml-[13px] mr-[17px] h-6 w-[19px]"><use href="#func" /></svg>
          <a href="#">BP_King</a>
          <svg class="mx-[9px] h-4 w-[10px]" viewBox="0 0 10 16"><path d="M1.500 1.500L8 8l-6.500 6.500" fill="none" stroke="#ccc" stroke-width="2.500" /></svg>
          <span>ARKit Setup</span>
          <span class="mb-1 ml-auto mr-[6px] font-bold text-[#3c3c3c]">Zoom -2</span>
        </div>
      </section>

      <!-- results -->
      <section class="mt-[6px] shrink-0">
        <nav class="flex h-[21px] gap-px pl-1 [text-shadow:1px_1px_0_#000] [&>a]:flex [&>a]:w-[150px] [&>a]:items-center [&>a]:pl-[7px] [&>a]:pr-[10px] [&>a]:pb-[2px]">
          <a href="#" class="bg-[#2d2d2d]"><svg class="mr-[6px] size-[15px]" viewBox="0 0 15 15"><path d="M2 0h11l2 15H1z" fill="#c7d8f4" /><path d="M3 3l5 4-5 4M8 12h5" fill="none" stroke="#2a3c66" stroke-width="1.800" /></svg><span class="flex-1">Compiler Results</span><svg class="size-[5px] text-[#1a1a1a]"><use href="#close" /></svg></a>
          <a href="#" class="bg-[#3f3f3f]"><svg class="mr-[5px] size-4"><use href="#lens" /></svg><span class="flex-1">Find Results</span><svg class="size-[5px] text-[#1a1a1a]"><use href="#close" /></svg></a>
        </nav>
        <div class="bg-[#3f3f3f] px-[2px] pt-[3px]">
          <div class="flex items-center gap-[5px] pr-[2px]">
            <div class="flex h-[22px] flex-1 items-center rounded-[2px] bg-[#c8c8c8] pl-[5px] pr-[1px] text-black"><input type="text" aria-label="Find references" placeholder="Enter function or event name to find references..." class="w-full bg-transparent placeholder:text-[#888] outline-none" /><svg class="size-4 shrink-0"><use href="#search" /></svg></div>
            <button aria-label="Find in all blueprints" class="grid h-[21px] w-6 place-items-center rounded-[1px] bg-linear-to-b from-[#ddd] to-[#aaa]"><svg class="h-[14px] w-[14px]" viewBox="0 0 14 14"><path d="M3 0h3v3h2V0h3l3 9v5H9V7H5v7H0V9z" fill="#000" /></svg></button>
          </div>
          <div class="mt-[3px] h-[131px] border border-b-0 border-black bg-linear-to-b from-[#232323] to-[#191919]"></div>
        </div>
      </section>
    </div>

    <!-- details -->
    <section class="flex min-h-0 flex-col">
      <h2 class="ml-1 flex h-[22px] w-[150px] shrink-0 items-center gap-[6px] bg-[#3f3f3f] pl-[6px] pr-[10px] pb-px [text-shadow:1px_1px_0_#000]">
        <svg class="size-4" viewBox="0 0 16 16"><path d="M11 11l4 4" stroke="#5c76c4" stroke-width="2.500" /><circle cx="7" cy="7" r="6" fill="#666" stroke="#6f88cf" stroke-width="1.500" /><path d="M7 3v2M5.500 6.500H7V11M5 11h4" stroke="#fff" stroke-width="1.600" fill="none" /></svg>
        <span class="flex-1">Details</span><svg class="size-[5px] text-[#222]"><use href="#close" /></svg>
      </h2>
      <div class="flex-1 bg-[#3f3f3f]"></div>
    </section>
  </main>
</body>
</html>
